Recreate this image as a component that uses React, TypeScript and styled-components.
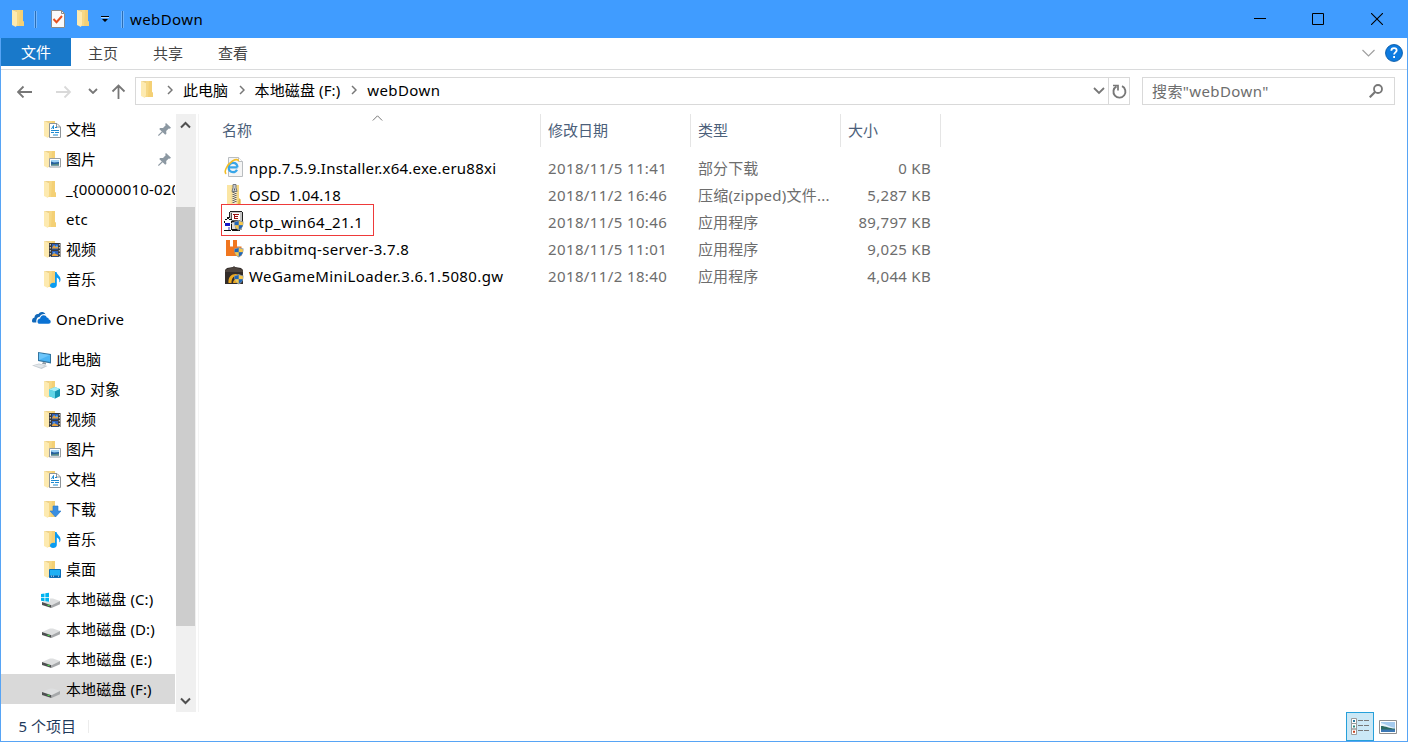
import React from 'react';
import styled, { createGlobalStyle } from 'styled-components';

const Global = createGlobalStyle`
  * { box-sizing: border-box; }
  html, body { margin: 0; padding: 0; background: #fff; overflow: hidden; }
  body { font-family: "Noto Sans", "Noto Sans CJK SC", sans-serif; font-size: 15px; color: #000; }
  svg { display: block; flex: none; }
`;

const Window = styled.div`
  width: 1408px;
  height: 742px;
  display: flex;
  flex-direction: column;
  background: #fff;
  border: 1px solid #57a4f5;
  border-top: 0;
`;

const Label = styled.span<{ $ls?: number }>`
  letter-spacing: ${p => p.$ls ?? 0}px;
  white-space: pre;
  line-height: 20px;
`;

/* Title bar */
const TitleBar = styled.header`
  height: 38px;
  flex: none;
  display: flex;
  align-items: center;
  background: #409cff;
  margin: 0 -1px;
  padding-left: 11px;
`;
const Separator = styled.i`
  width: 3px;
  height: 17px;
  background: #2d6eb4;
  border: 1px solid #71b6ff;
  border-width: 0 1px;
`;
const TitleText = styled(Label)`
  margin-left: 6px;
  flex: 1;
`;
const CaptionButton = styled.div`
  width: 58.5px;
  height: 38px;
  display: flex;
  align-items: center;
  justify-content: center;
`;
const Gap = styled.span<{ $w: number }>`
  width: ${p => p.$w}px;
  flex: none;
`;
const Spacer = styled.span`
  flex: 1;
`;

/* Ribbon tabs */
const Ribbon = styled.nav`
  height: 32px;
  flex: none;
  display: flex;
  border-bottom: 1px solid #dadbdc;
`;
const FileTab = styled.div`
  width: 70px;
  height: 28px;
  background: #1979ca;
  color: #fff;
  display: flex;
  align-items: center;
  justify-content: center;
`;
const Tab = styled.div`
  width: 65px;
  height: 30px;
  display: flex;
  align-items: center;
  padding-left: 17px;
  color: #444;
`;
const RibbonEnd = styled.div`
  margin-left: auto;
  display: flex;
  align-items: center;
  gap: 10px;
  padding: 0 4px 1px 0;
`;

/* Address row */
const AddressRow = styled.div`
  height: 44px;
  flex: none;
  display: flex;
  align-items: flex-start;
  padding: 7px 12px 0 14px;
`;
const NavButtons = styled.div`
  display: flex;
  height: 28px;
  width: 120px;
  align-items: center;
`;
const Field = styled.div<{ $w: number }>`
  width: ${p => p.$w}px;
  height: 28px;
  border: 1px solid #d9d9d9;
  display: flex;
  align-items: center;
`;
const Path = styled.div`
  height: 26px;
  padding-bottom: 2px;
  display: flex;
  align-items: center;
`;
const Refresh = styled.div`
  width: 21px;
  height: 26px;
  border-left: 1px solid #d9d9d9;
  display: flex;
  align-items: center;
  justify-content: center;
`;
const SearchText = styled(Label)`
  color: #6d6d6d;
  padding-left: 9px;
  flex: 1;
`;

/* Body */
const Body = styled.main`
  flex: 1;
  min-height: 0;
  display: flex;
`;
const Sidebar = styled.aside`
  width: 174px;
  overflow: hidden;
`;
const NavItem = styled.div<{ $root?: boolean; $active?: boolean }>`
  height: 30px;
  margin: ${p => (p.$root ? '10px 0' : '0')};
  padding-left: ${p => (p.$root ? 30 : 40)}px;
  display: flex;
  align-items: center;
  gap: 5px;
  background: ${p => (p.$active ? '#d9d9d9' : 'transparent')};

  & + & { margin-bottom: 0; }
`;
const PinSlot = styled.span`
  margin-left: auto;
  padding-right: 4px;
`;
const Scrollbar = styled.div`
  width: 20px;
  margin-left: 1px;
  height: 598px;
  background: #f0f0f0;
  display: flex;
  flex-direction: column;
  align-items: flex-start;
`;
const ScrollButton = styled.div`
  width: 19px;
  height: 22px;
  display: flex;
  align-items: center;
  justify-content: center;
`;
const Track = styled.div`
  flex: 1;
  padding-top: 71px;
`;
const Thumb = styled.div`
  width: 19px;
  height: 419px;
  background: #cdcdcd;
`;
const Content = styled.section`
  flex: 1;
  margin-left: 2px;
  border-left: 1px solid #f4f4f4;
  padding-left: 22px;
  height: 598px;
`;
const Header = styled.div`
  display: flex;
  height: 33px;
  color: #4c607a;
`;
const HeadCell = styled.div<{ $w: number; $pad?: number }>`
  width: ${p => p.$w}px;
  padding: 6px 0 0 ${p => p.$pad ?? 7}px;
  border-right: 1px solid #e5e5e5;
  position: relative;
`;
const SortMark = styled.span`
  position: absolute;
  left: 151px;
  top: 1px;
`;
const Rows = styled.div`
  padding-top: 7px;
`;
const Row = styled.div`
  display: flex;
  align-items: center;
  height: 27px;
  color: #6d6d6d;
`;
const NameCell = styled.div`
  width: 327px;
  display: flex;
  align-items: center;
  gap: 5px;
  padding-left: 3px;
  color: #000;
  position: relative;
`;
const Highlight = styled.span`
  position: absolute;
  left: 0;
  top: -7px;
  width: 153px;
  height: 32px;
  border: 1px solid #ee3a3a;
`;
const Cell = styled.div<{ $w: number; $right?: boolean }>`
  width: ${p => p.$w}px;
  display: flex;
  justify-content: ${p => (p.$right ? 'flex-end' : 'flex-start')};
`;

/* Status bar */
const StatusBar = styled.footer`
  height: 29px;
  flex: none;
  display: flex;
  align-items: center;
  padding-left: 17.5px;
  color: #1e395b;
`;
const StatusText = styled(Label)`
  margin-bottom: 2px;
`;
const StatusRule = styled.i`
  width: 1px;
  height: 13px;
  margin-left: 12px;
  background: #ececec;
`;
const ViewButtons = styled.div`
  margin-left: auto;
  display: flex;
  align-items: center;
  padding-right: 10px;
  gap: 5px;
`;
const DetailsButton = styled.div`
  width: 28px;
  height: 29px;
  border: 1px solid #26a0da;
  background: #cbe8f6;
  display: flex;
  align-items: center;
  justify-content: center;
`;

/* Icons */
const FolderShape = () => (
  <>
    <path d="M6 2h8v11l1 1v4H5z" fill="#f6d885" />
    <path d="M11 2h3v11l1 1v4h-5z" fill="#f4d075" />
    <path d="M3 2h1l4 2v12l-1 3-4-2z" fill="#fdeab0" />
    <path d="M3 2h5v2z" fill="#ecd088" />
  </>
);

const overlays: Record<string, React.ReactNode> = {
  folder: null,
  doc: (
    <>
      <path d="M8.500 4.500h7.500l3.500 3.500v10.500H8.500z" fill="#fff" stroke="#8d9499" />
      <path d="M15.500 4.500v3.500H19" fill="none" stroke="#8d9499" />
      <path d="M10.500 10l2-3.500v3.500M14 8.500h2M10 11.500h8M10 13.500h3M14 13.500h4M12 16h5" stroke="#1d8ad0" fill="none" />
    </>
  ),
  picture: (
    <>
      <path d="M8.500 9.500h11v8.500h-11z" fill="#fff" stroke="#9a9fa3" />
      <path d="M10 11h8v3h-8z" fill="#9ed2f4" />
      <path d="M10 12.500l3 1 5-.5v3.500h-8z" fill="#245f9e" />
      <path d="M10 15.500l8-1v2h-8z" fill="#5b8d83" />
    </>
  ),
  video: (
    <>
      <path d="M8 4h11.500v14H8z" fill="#3a3a3a" />
      <path d="M9.300 5v13M18.300 5v13" stroke="#dedede" strokeDasharray="1.500 1.500" />
      <path d="M11 5h6v5.500h-6zM11 12h6v5.500h-6z" fill="#2f61bd" />
      <path d="M11 9l2-3 2 2 2-1v2.500h-6zM11 16l2-2 4 2v1h-6z" fill="#e7a13a" />
      <path d="M14 8l2-2 1 2zM12 13h2l-1 2z" fill="#63b5ec" />
    </>
  ),
  music: (
    <path d="M14 3h1.500c.5 3 4.500 4 4 8-.2 1.500-.8 2-1.300 2.500.8-2.500-.7-4.500-2.400-5V16c0 2-1.800 3-3.700 3S9 18 9 16.500s1.500-2.800 3.500-2.800c.6 0 1 .1 1.500.3z" fill="#0a9bf0" />
  ),
  cube: (
    <>
      <path d="M8 10.500L14 8l5 2v7l-5 2.500-6-2.500z" fill="#35bfd8" />
      <path d="M8 10.500L14 8l5 2-5 2.500z" fill="#a6edf6" />
      <path d="M14 12.500l5-2.500v7l-5 2.500z" fill="#1695b2" />
      <path d="M8 10.500l6 2V19.500L8 17z" fill="#62d5e6" />
    </>
  ),
  download: <path d="M12 7h5v5h3l-5.500 6L9 12h3z" fill="#3a8ee0" stroke="#2878c8" strokeWidth=".6" />,
  desktop: (
    <>
      <path d="M8.500 10.500h11v8h-11z" fill="#1eb0f4" stroke="#0f6fb8" />
      <path d="M9 16.500h10v1.500H9z" fill="#0a62a8" />
      <path d="M10 17.200h1M12 17.200h1M17 17.200h1" stroke="#fff" strokeWidth=".8" />
    </>
  ),
};

const DriveShape = () => (
  <>
    <path d="M1 13l8-3.500h3l7 2.500-8.500 4.200z" fill="#dedfe0" />
    <path d="M1 13l9.500 3.200V19L1 16z" fill="#4d4f51" />
    <path d="M10.500 16.200L19 12v3.200L10.500 19z" fill="#a6a8aa" />
    <path d="M6.500 16l2 .6" stroke="#52e052" strokeWidth="1.300" />
  </>
);

const NavIcon = ({ kind }: { kind: string }) => (
  <svg width="20" height="20" viewBox="0 0 20 20">
    {kind === 'onedrive' ? (
      <>
        <path d="M1 12c0-2 1-3.200 2.500-3.500C3.500 6 5.500 4.500 7.500 5c1-2 3-2.500 4.800-1.800 1 .4 1.700 1 2.200 2-3-.5-5 .6-6 2.800C6.200 8 5 10 5.300 13.500H3C1.700 13.500 1 13 1 12z" fill="#1268b8" />
        <path d="M6.500 12.500c0-1.700 1-2.800 2.600-3 .2-2 1.600-3.300 3.500-3.300 1.600 0 2.700.8 3.200 2.200 1.200 0 2 .8 2 2 1.300.2 1.900 1 1.900 2.200 0 1.500-.8 2.200-2.200 2.200H8.700c-1.400 0-2.200-.9-2.200-2.300z" fill="#0a72d4" />
      </>
    ) : kind === 'pc' ? (
      <>
        <path d="M7 3l13 2v9.500L7 12z" fill="#33749f" />
        <path d="M8 4.200l11 1.700v7.200L8 11z" fill="#4bb4f5" />
        <path d="M8 4.200l11 1.700L8 11z" fill="#6cc5fa" />
        <path d="M12 13l3 .6v2l-4-.6z" fill="#8f9ba5" />
        <path d="M1 16.500l7-2 8.500 2.500-6 3z" fill="#c5ccd2" />
        <path d="M3 16.500l5-1.300 6 1.800-4 1.700z" fill="#e3e7ea" />
      </>
    ) : kind === 'drive' || kind === 'system' ? (
      <>
        <DriveShape />
        {kind === 'system' && (
          <>
            <path d="M0 3.500h9v9H0z" fill="#fff" />
            <path d="M0 5l3.500-.6V8H0zM4.300 4.300L8 3.800V8H4.300zM0 8.800h3.500v3.500L0 11.800zM4.300 8.800H8v4l-3.700-.5z" fill="#00b4f0" />
          </>
        )}
      </>
    ) : (
      <>
        <FolderShape />
        {overlays[kind]}
      </>
    )}
  </svg>
);

const Pin = () => (
  <svg width="13" height="13" viewBox="0 0 13 13">
    <path d="M8 0l5 4.800-1.200.9-1-.3-2.600 2.700.2 2.700-1.200 1L4.700 9.200 1 12.800l-.8-.1L.1 12l3.700-3.500L1.200 6l1-1.100 2.800.1L7.700 2.200 7.200 1z" fill="#8c98a2" />
  </svg>
);

const Chevron = ({ w, h, d, color, sw = 1.5 }: { w: number; h: number; d: string; color: string; sw?: number }) => (
  <svg width={w} height={h} viewBox={`0 0 ${w} ${h}`}>
    <path d={d} fill="none" stroke={color} strokeWidth={sw} />
  </svg>
);

const Shield = () => (
  <>
    <path d="M14.800 9c1.500.9 3 1.300 4.700 1.400.2 4.200-1.200 7.400-4.700 9-3.500-1.600-4.900-4.800-4.700-9 1.700-.1 3.200-.5 4.700-1.400z" fill="#8e9aa3" />
    <path d="M14.800 10v4.300h-4c-.1-1-.1-2 0-3.100 1.500-.1 2.700-.5 4-1.200z" fill="#1f66b8" />
    <path d="M14.800 10c1.300.7 2.500 1.100 4 1.200.1 1.100.1 2.100 0 3.100h-4z" fill="#f7c84a" />
    <path d="M10.800 14.300h4v4.300c-2.300-1.100-3.600-2.500-4-4.300z" fill="#f7c84a" />
    <path d="M18.800 14.300h-4v4.300c2.300-1.100 3.600-2.500 4-4.300z" fill="#1f66b8" />
  </>
);

const FileIcon = ({ kind }: { kind: string }) => (
  <svg width="20" height="21" viewBox="0 0 20 21">
    {kind === 'ie' && (
      <>
        <path d="M4.500.5h10l4 4v15h-14z" fill="#f5f5f5" stroke="#b9bdc0" />
        <path d="M14.500.5v4h4" fill="#fff" stroke="#b9bdc0" />
        <path d="M13.600 10.400H5M13 12.700c-.8 1.600-2.100 2.500-4 2.500-2.700 0-4.400-2-4.400-4.700s1.800-4.700 4.500-4.700 4.300 1.900 4.400 4.600" fill="none" stroke="#38a6e8" strokeWidth="2.200" />
        <path d="M2.300 16.800C-.8 15.500 3 7.500 8.500 4 12 2 14.500 2.300 14.600 4.200" fill="none" stroke="#f3bd26" strokeWidth="1.600" />
      </>
    )}
    {kind === 'zip' && (
      <>
        <path d="M3 1h12v14l1.500 1v4H3z" fill="#f6d885" />
        <path d="M3 1h4.500v19H3z" fill="#fbe6a4" />
        <path d="M15 14l1.500 1.500V20H14z" fill="#e0b748" />
        <path d="M8.500 6h4v14h-4z" fill="#f3ead2" />
        <path d="M8.500 8.500h2M10.500 9.500h2M8.500 10.500h2M10.500 11.500h2M8.500 12.500h2M10.500 13.500h2M8.500 14.500h2M10.500 15.500h2M8.500 16.500h2M10.500 17.500h2M8.500 18.500h2" stroke="#6b675e" />
        <path d="M9 .5h3v3l1 4H8l1-4z" fill="#c8ccd0" stroke="#777b7f" />
        <path d="M10 4.500h1v2h-1z" fill="#55585b" />
      </>
    )}
    {kind === 'setup' && (
      <g shapeRendering="crispEdges">
        <path d="M6 0h12v10H6z" fill="#c6c6c6" />
        <path d="M6 0h12v1H6zM18 1h1v13h-1zM5 1h1v6H5z" fill="#222" />
        <path d="M8 2h8v7H8z" fill="#fff" />
        <path d="M7 2h1v7H7zM8 9h8v1H8z" fill="#555" />
        <path d="M9 3h6v1H9zM11 5h3v1h-3zM11 7h3v1h-3zM10 4h1v4h-1z" fill="#9c1414" />
        <path d="M6 11h12v8H6z" fill="#a6a6a6" />
        <path d="M6 10h12v1H6z" fill="#111" />
        <path d="M8 12h3v6H8z" fill="#dcdcdc" />
        <path d="M1 9h6v10H1z" fill="#fff" />
        <path d="M3 6h2v2H3zM1 8h2v1H1zM5 8h3v1H5zM0 10h1v2H0zM7 10h1v2H7zM0 19h7v1H0zM7 13h1v6H7zM8 18h8v2H8z" fill="#111" />
        <path d="M1 12h5v3H1z" fill="#1616c8" />
        <path d="M4 16h2v3H4z" fill="#9a9ae0" />
      </g>
    )}
    {kind === 'rabbit' && (
      <path d="M2 2h4v6.500h3V2h4v6.500h4.500V18H2z" fill="#f0761f" />
    )}
    {kind === 'wegame' && (
      <>
        <path d="M1 5l2-2 6-1 1-1 1 1 6 1 2 2v14H1z" fill="#332d2a" />
        <path d="M1 5l9-3 9 3v2H1z" fill="#4d443e" />
        <path d="M4.500 18c-.5-6 3-9 7-9 2 0 3.500 1 4.500 2.300h-3.500c-3-.5-5 2-5 6.700z" fill="#eea91e" />
        <path d="M9 18c.3-3 1.500-4 4-4.300V18z" fill="#eea91e" />
      </>
    )}
    {(kind === 'setup' || kind === 'rabbit' || kind === 'wegame') && <Shield />}
  </svg>
);

const TitleFolder = () => (
  <svg width="16" height="20" viewBox="2 1 16 20">
    <FolderShape />
  </svg>
);

type Nav = { icon: string; text: string; ls?: number; root?: boolean; pin?: boolean; active?: boolean };
type NavGroup = Nav[];
const nav: NavGroup = [
  { icon: 'doc', text: '文档', pin: true },
  { icon: 'picture', text: '图片', pin: true },
  { icon: 'folder', text: '_{00000010-0200', ls: 0.2 },
  { icon: 'folder', text: 'etc', ls: 0.3 },
  { icon: 'video', text: '视频' },
  { icon: 'music', text: '音乐' },
  { icon: 'onedrive', text: 'OneDrive', ls: 0.2, root: true },
  { icon: 'pc', text: '此电脑', root: true },
  { icon: 'cube', text: '3D 对象', ls: 0.15 },
  { icon: 'video', text: '视频' },
  { icon: 'picture', text: '图片' },
  { icon: 'doc', text: '文档' },
  { icon: 'download', text: '下载' },
  { icon: 'music', text: '音乐' },
  { icon: 'desktop', text: '桌面' },
  { icon: 'system', text: '本地磁盘 (C:)', ls: 0.1 },
  { icon: 'drive', text: '本地磁盘 (D:)', ls: 0.1 },
  { icon: 'drive', text: '本地磁盘 (E:)', ls: 0.1 },
  { icon: 'drive', text: '本地磁盘 (F:)', ls: 0.1, active: true },
];

const files = [
  { icon: 'ie', name: 'npp.7.5.9.Installer.x64.exe.eru88xi', ls: 0.23, date: '2018/11/5 11:41', type: '部分下载', size: '0 KB' },
  { icon: 'zip', name: 'OSD  1.04.18', ls: 0.2, date: '2018/11/2 16:46', type: '压缩(zipped)文件...', size: '5,287 KB' },
  { icon: 'setup', name: 'otp_win64_21.1', ls: 0.38, date: '2018/11/5 10:46', type: '应用程序', size: '89,797 KB', marked: true },
  { icon: 'rabbit', name: 'rabbitmq-server-3.7.8', ls: 0.35, date: '2018/11/5 11:01', type: '应用程序', size: '9,025 KB' },
  { icon: 'wegame', name: 'WeGameMiniLoader.3.6.1.5080.gw', ls: 0.4, date: '2018/11/2 18:40', type: '应用程序', size: '4,044 KB' },
];

const Crumb = () => <Chevron w={6} h={10} d="M1 1l4 4-4 4" color="#777" />;

export default function App() {
  return (
    <>
      <Global />
      <Window>
        <TitleBar>
          <TitleFolder />
          <Gap $w={7} />
          <Separator />
          <Gap $w={14} />
          <svg width="14" height="18" viewBox="0 0 14 18">
            <path d="M.5.500h10l3 3v14H.500z" fill="#fafafa" stroke="#8a8a8a" />
            <path d="M10.500.500v3h3" fill="none" stroke="#8a8a8a" />
            <path d="M2.500 9l3 3.200L11 6" fill="none" stroke="#e8501e" strokeWidth="2" />
          </svg>
          <Gap $w={11} />
          <TitleFolder />
          <Gap $w={9} />
          <svg width="8" height="8" viewBox="0 0 8 8">
            <path d="M0 1h8v1H0zM1 4h6L4 7z" fill="#000" />
            <path d="M0 2h8v1H0z" fill="#b4d9ff" />
          </svg>
          <Gap $w={12} />
          <Separator />
          <TitleText $ls={0.4}>webDown</TitleText>
          <CaptionButton>
            <svg width="12" height="12" viewBox="0 0 12 12"><path d="M0 5.500h12" stroke="#000" /></svg>
          </CaptionButton>
          <CaptionButton>
            <svg width="12" height="12" viewBox="0 0 12 12"><path d="M.5.500h11v11H.500z" fill="none" stroke="#000" /></svg>
          </CaptionButton>
          <CaptionButton>
            <svg width="12" height="12" viewBox="0 0 12 12"><path d="M0 0l12 12M12 0L0 12" stroke="#000" strokeWidth="1.100" /></svg>
          </CaptionButton>
          <Gap $w={2} />
        </TitleBar>

        <Ribbon>
          <FileTab><Label>文件</Label></FileTab>
          <Tab><Label>主页</Label></Tab>
          <Tab><Label>共享</Label></Tab>
          <Tab><Label>查看</Label></Tab>
          <RibbonEnd>
            <Chevron w={13} h={8} d="M.5 1l6 6 6-6" color="#a0a0a0" sw={1.2} />
            <svg width="18" height="18" viewBox="0 0 19 19">
              <circle cx="9.500" cy="9.500" r="8.900" fill="#0d7be0" stroke="#0b5ca8" />
              <path d="M6.700 7c0-1.800 1.200-2.600 2.800-2.600s2.800.9 2.800 2.400c0 2-2.700 2.200-2.700 4.400M9.600 12.700v2" fill="none" stroke="#fff" strokeWidth="1.900" />
            </svg>
          </RibbonEnd>
        </Ribbon>

        <AddressRow>
          <NavButtons>
            <Gap $w={2} />
            <Chevron w={16} h={14} d="M15 8H1M6.500 2.500L1 8l5.500 5.500" color="#777" sw={1.800} />
            <Gap $w={23} />
            <Chevron w={16} h={14} d="M0 8h14M8.500 2.500L14 8l-5.500 5.500" color="#d9d9d9" sw={1.800} />
            <Gap $w={16} />
            <Chevron w={10} h={6} d="M1 1l4 4 4-4" color="#777" sw={1.800} />
            <Gap $w={13} />
            <Chevron w={15} h={16} d="M7.500 16V2.500M1.500 8.500l6-6 6 6" color="#777" sw={1.800} />
          </NavButtons>
          <Field $w={995}>
            <Path>
              <Gap $w={4} />
              <TitleFolder />
              <Gap $w={11} />
              <Crumb />
              <Gap $w={10} />
              <Label>此电脑</Label>
              <Gap $w={11} />
              <Crumb />
              <Gap $w={9.5} />
              <Label $ls={0.12}>本地磁盘 (F:)</Label>
              <Gap $w={11} />
              <Crumb />
              <Gap $w={10} />
              <Label $ls={0.4}>webDown</Label>
            </Path>
            <Spacer />
            <Chevron w={12} h={8} d="M1 1l5 5 5-5" color="#777" sw={1.800} />
            <Gap $w={3.5} />
            <Refresh>
              <svg width="15" height="15" viewBox="0 0 15 15">
                <path d="M10 2.200a6 6 0 1 1-5.500.2" fill="none" stroke="#777" strokeWidth="1.900" />
                <path d="M1 1.500h5v5" fill="none" stroke="#777" strokeWidth="1.700" />
              </svg>
            </Refresh>
          </Field>
          <Gap $w={12} />
          <Field $w={253}>
            <SearchText $ls={0.4}>搜索"webDown"</SearchText>
            <svg width="14" height="14" viewBox="0 0 14 14">
              <circle cx="9" cy="5" r="4" fill="none" stroke="#777" strokeWidth="1.800" />
              <path d="M6 8l-5.300 5.300" stroke="#777" strokeWidth="2.200" />
            </svg>
            <Gap $w={11} />
          </Field>
        </AddressRow>

        <Body>
          <Sidebar>
            {nav.map((n, i) => (
              <React.Fragment key={i}>
                <NavItem $root={n.root} $active={n.active}>
                  <NavIcon kind={n.icon} />
                  <Label $ls={n.ls}>{n.text}</Label>
                  {n.pin && <PinSlot><Pin /></PinSlot>}
                </NavItem>
              </React.Fragment>
            ))}
          </Sidebar>
          <Scrollbar>
            <ScrollButton><Chevron w={11} h={8} d="M1 6.500l4.500-4.500L10 6.500" color="#505050" sw={2} /></ScrollButton>
            <Track><Thumb /></Track>
            <ScrollButton><Chevron w={11} h={8} d="M1 1.500L5.500 6 10 1.500" color="#505050" sw={2} /></ScrollButton>
          </Scrollbar>
          <Content>
            <Header>
              <HeadCell $w={320} $pad={1}>
                <SortMark><Chevron w={11} h={6} d="M.8 5.500l4.700-4.700 4.700 4.700" color="#777" sw={1} /></SortMark>
                <Label>名称</Label>
              </HeadCell>
              <HeadCell $w={150}><Label>修改日期</Label></HeadCell>
              <HeadCell $w={150}><Label>类型</Label></HeadCell>
              <HeadCell $w={100}><Label>大小</Label></HeadCell>
            </Header>
            <Rows>
              {files.map(f => (
                <Row key={f.name}>
                  <NameCell>
                    <FileIcon kind={f.icon} />
                    <Label $ls={f.ls}>{f.name}</Label>
                    {f.marked && <Highlight />}
                  </NameCell>
                  <Cell $w={150}><Label $ls={0.38}>{f.date}</Label></Cell>
                  <Cell $w={150}><Label $ls={f.icon === 'zip' ? 0.25 : 0.1}>{f.type}</Label></Cell>
                  <Cell $w={83} $right><Label $ls={0.3}>{f.size}</Label></Cell>
                </Row>
              ))}
            </Rows>
          </Content>
        </Body>

        <StatusBar>
          <StatusText>5 个项目</StatusText>
          <StatusRule />
          <ViewButtons>
            <DetailsButton>
              <svg width="18" height="17" viewBox="0 0 18 17">
                <path d="M.5.500h5v5h-5zM.5 5.500h5v5.500h-5zM.5 11h5v5.500h-5z" fill="#fff" stroke="#9a9a9a" />
                <path d="M2 2h2v2H2z" fill="#2b7a9e" />
                <path d="M2 7.500h2v2H2z" fill="#2b8a7e" />
                <path d="M2 12.800h2v2H2z" fill="#c8421e" />
                <path d="M7 2.500h5M13 2.500h5M7 7.500h5M13 7.500h5M7 12.500h5M13 12.500h5" stroke="#777" />
              </svg>
            </DetailsButton>
            <svg width="18" height="14" viewBox="0 0 18 14">
              <path d="M.5.500h17v13H.500z" fill="#fff" stroke="#8f8f8f" />
              <path d="M2 2h14v10H2z" fill="#a5cbee" />
              <path d="M2 3c4 1 9 4 14 5v1H2z" fill="#e8f3fb" />
              <path d="M2 6c5 0 8 2.500 14 2.500V10H2z" fill="#2d6b63" />
              <path d="M2 9.500h14V12H2z" fill="#3c78b4" />
            </svg>
          </ViewButtons>
        </StatusBar>
      </Window>
    </>
  );
}
